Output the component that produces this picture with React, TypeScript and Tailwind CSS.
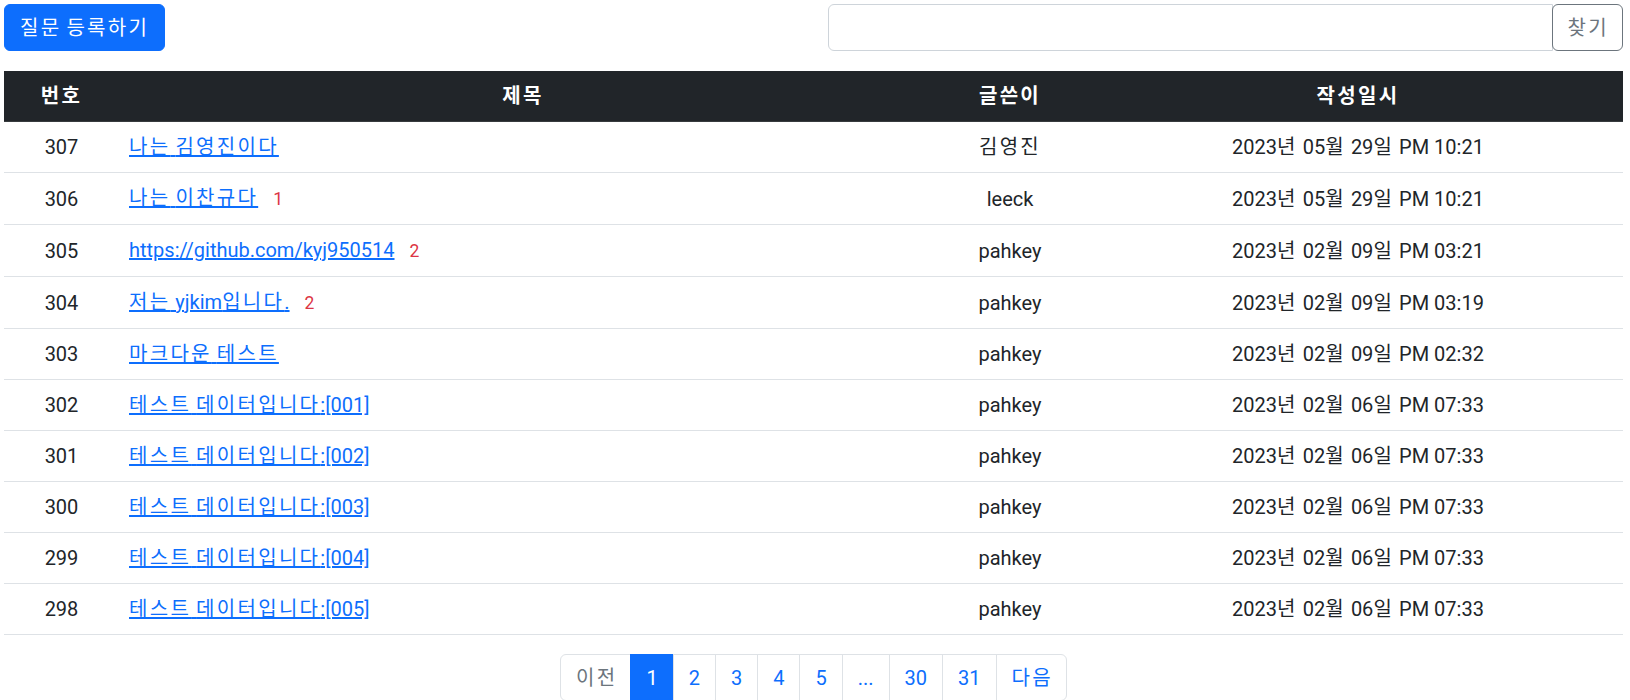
const FONT = "font-['Roboto','Noto_Sans_CJK_KR',sans-serif]";

// Hangul runs get extra tracking so they take the width of the wider original face
function K({ t }: { t: string }) {
  const parts = t.split(/([\uac00-\ud7a3]+)/);
  return (
    <>
      {parts.map((p, i) =>
        /[\uac00-\ud7a3]/.test(p) ? (
          <span key={i} className="tracking-[2.3px]">
            {p}
          </span>
        ) : (
          p
        )
      )}
    </>
  );
}

type Row = {
  id: number;
  title: string;
  count?: number;
  author: string;
  date: string;
};

const ROWS: Row[] = [
  { id: 307, title: "나는 김영진이다", author: "김영진", date: "2023년 05월 29일 PM 10:21" },
  { id: 306, title: "나는 이찬규다", count: 1, author: "leeck", date: "2023년 05월 29일 PM 10:21" },
  { id: 305, title: "https://github.com/kyj950514", count: 2, author: "pahkey", date: "2023년 02월 09일 PM 03:21" },
  { id: 304, title: "저는 yjkim입니다.", count: 2, author: "pahkey", date: "2023년 02월 09일 PM 03:19" },
  { id: 303, title: "마크다운 테스트", author: "pahkey", date: "2023년 02월 09일 PM 02:32" },
  { id: 302, title: "테스트 데이터입니다:[001]", author: "pahkey", date: "2023년 02월 06일 PM 07:33" },
  { id: 301, title: "테스트 데이터입니다:[002]", author: "pahkey", date: "2023년 02월 06일 PM 07:33" },
  { id: 300, title: "테스트 데이터입니다:[003]", author: "pahkey", date: "2023년 02월 06일 PM 07:33" },
  { id: 299, title: "테스트 데이터입니다:[004]", author: "pahkey", date: "2023년 02월 06일 PM 07:33" },
  { id: 298, title: "테스트 데이터입니다:[005]", author: "pahkey", date: "2023년 02월 06일 PM 07:33" },
];

const PAGES = ["1", "2", "3", "4", "5", "...", "30", "31"];

export default function App() {
  return (
    <div className={`${FONT} bg-white text-[#212529] text-[20px] leading-[30px] pl-[4px] pr-[7px] pt-[4px] h-[700px] overflow-hidden`}>
      {/* top bar */}
      <div className="flex items-start justify-between">
        <button className="h-[47px] px-[15px] rounded-[6px] bg-[#0d6efd] border border-[#0d6efd] text-white">
          <K t="질문 등록하기" />
        </button>
        <div className="flex w-[795px] h-[47px]">
          <input
            type="text"
            className="flex-1 min-w-0 border border-[#ced4da] rounded-l-[6px] px-[15px] outline-none"
          />
          <button className="pl-[15px] pr-[13px] -ml-px border border-[#6c757d] rounded-[6px] text-[#6c757d] bg-white">
            <K t="찾기" />
          </button>
        </div>
      </div>

      {/* table */}
      <table className="w-full mt-[20px] border-collapse table-fixed">
        <thead>
          <tr className="bg-[#212529] text-white font-bold text-center border-b border-[#373b3e]">
            <th className="w-[115px] p-[10px]"><K t="번호" /></th>
            <th className="w-[808px] p-[10px]"><K t="제목" /></th>
            <th className="w-[166px] p-[10px]"><K t="글쓴이" /></th>
            <th className="p-[10px]"><K t="작성일시" /></th>
          </tr>
        </thead>
        <tbody>
          {ROWS.map((r) => (
            <tr key={r.id} className="border-b border-[#dee2e6]">
              <td className="p-[10px] text-center">{r.id}</td>
              <td className="p-[10px] text-left">
                <a href="#" className="text-[#0d6efd] underline">
                  <K t={r.title} />
                </a>
                {r.count && (
                  <span className="ml-[15px] text-[#dc3545] text-[17.5px]">{r.count}</span>
                )}
              </td>
              <td className="p-[10px] text-center"><K t={r.author} /></td>
              <td className="p-[10px] text-center"><K t={r.date} /></td>
            </tr>
          ))}
        </tbody>
      </table>

      {/* pagination */}
      <div className="flex justify-center mt-[19px]">
        <ul className="flex">
          <li className="h-[47px] pl-[15px] pr-[13px] flex items-center border border-[#dee2e6] rounded-l-[6px] text-[#6c757d]">
            <K t="이전" />
          </li>
          {PAGES.map((p) => (
            <li
              key={p}
              className={
                p === "1"
                  ? "h-[47px] px-[15px] flex items-center -ml-px border border-[#0d6efd] bg-[#0d6efd] text-white"
                  : "h-[47px] px-[15px] flex items-center -ml-px border border-[#dee2e6] text-[#0d6efd]"
              }
            >
              {p}
            </li>
          ))}
          <li className="h-[47px] pl-[15px] pr-[13px] flex items-center -ml-px border border-[#dee2e6] rounded-r-[6px] text-[#0d6efd]">
            <K t="다음" />
          </li>
        </ul>
      </div>
    </div>
  );
}
